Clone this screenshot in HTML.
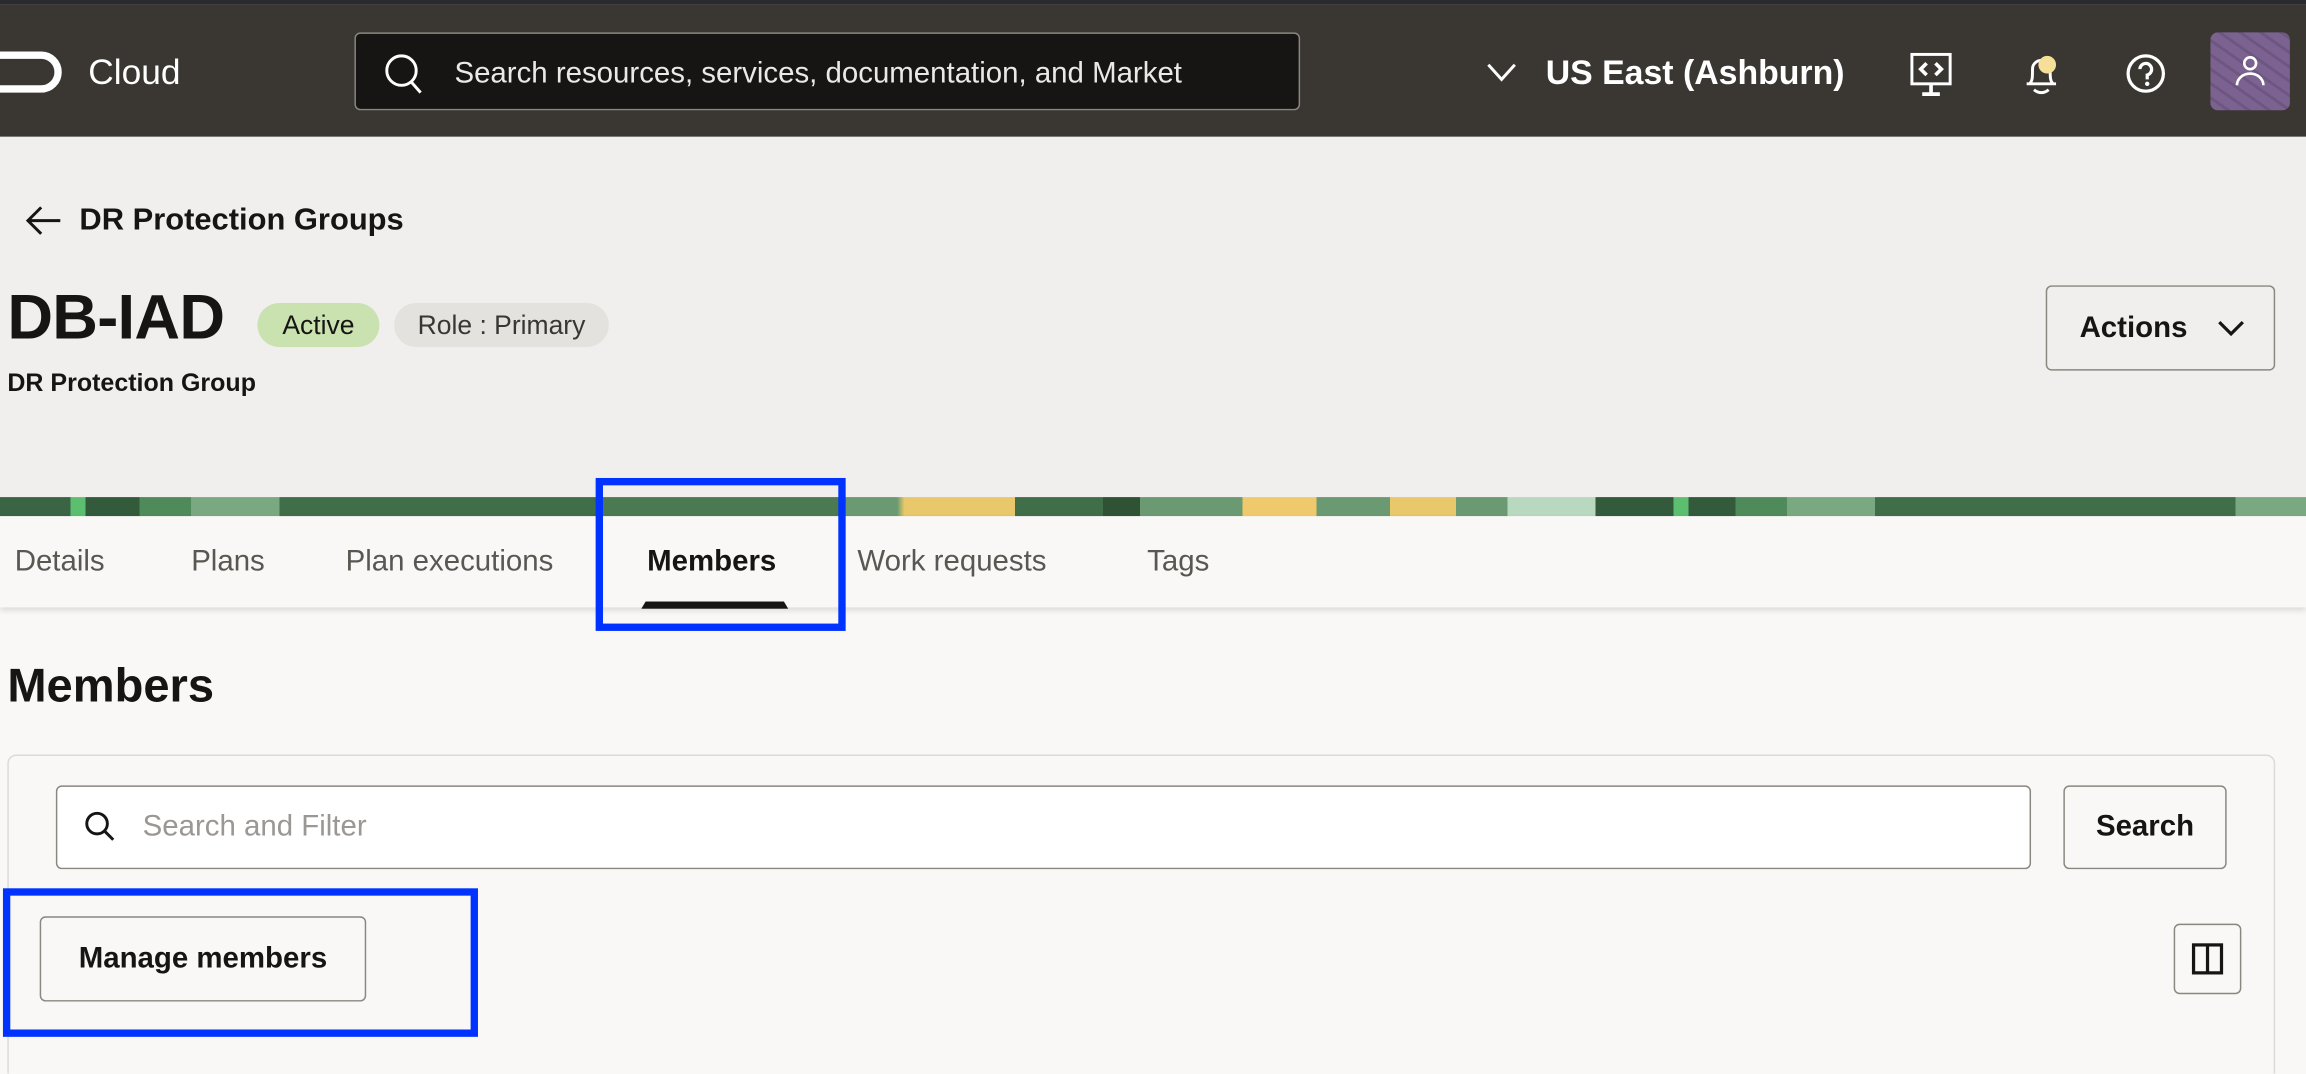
<!DOCTYPE html>
<html><head><meta charset="utf-8">
<style>
html,body{margin:0;padding:0;width:2306px;height:1074px;overflow:hidden;background:#f9f8f6;}
#w{position:absolute;left:0;top:0;width:1568px;height:730px;transform:scale(1.4707);transform-origin:0 0;font-family:"Liberation Sans",sans-serif;color:#161513;background:#f9f8f6;overflow:hidden}
.a{position:absolute}
.btn{position:absolute;border:1px solid #8a8680;border-radius:4px;background:#f9f8f6;box-sizing:border-box;display:flex;align-items:center;justify-content:center;font-weight:bold;font-size:19px;color:#161513}
.tab{position:absolute;top:371px;font-size:20px;color:#5a5753}
.blue{position:absolute;border:5px solid #0033ff;box-sizing:border-box}
</style></head><body><div id="w">
<div class="a" style="left:0;top:0;width:1568px;height:3px;background:#2b2a30"></div>
<div class="a" style="left:0;top:3px;width:1568px;height:90px;background:#3a3632"></div>
<div class="a" style="left:-24px;top:35px;width:56px;height:18px;border:5px solid #fff;border-radius:14px"></div>
<div class="a" style="left:60px;top:36px;font-size:24px;color:#fff">Cloud</div>
<div class="a" style="left:241px;top:22px;width:643px;height:53px;background:#161513;border:1px solid #8a8680;border-radius:4px;box-sizing:border-box"></div>
<svg class="a" style="left:259px;top:35px" width="30" height="30" viewBox="0 0 30 30"><circle cx="14" cy="13" r="10" fill="none" stroke="#fff" stroke-width="2"/><path d="M20 20l7 8" stroke="#fff" stroke-width="2"/></svg>
<div class="a" style="left:309px;top:39px;font-size:20px;color:#ebe9e6">Search resources, services, documentation, and Market</div>
<svg class="a" style="left:1010px;top:41px" width="22" height="16" viewBox="0 0 22 16"><path d="M2 3l9 10 9-10" fill="none" stroke="#fff" stroke-width="2"/></svg>
<div class="a" style="left:1051px;top:36px;font-size:23px;font-weight:bold;color:#fff">US East (Ashburn)</div>
<svg class="a" style="left:1298px;top:35px" width="32" height="32" viewBox="0 0 32 32"><rect x="2" y="2" width="26" height="20" fill="none" stroke="#fff" stroke-width="2"/><path d="M12 8l-4 4 4 4M18 8l4 4-4 4" fill="none" stroke="#fff" stroke-width="2.5"/><path d="M15 22v6M9 29h12" stroke="#fff" stroke-width="2.5"/></svg>
<svg class="a" style="left:1372px;top:33px" width="32" height="34" viewBox="0 0 32 34"><path d="M6 24h20M8 24c2-2 2-4 2-10a6 6 0 0 1 12 0c0 6 0 8 2 10" fill="none" stroke="#fff" stroke-width="2"/><path d="M11 28q5 4 10 0" fill="none" stroke="#fff" stroke-width="2"/><circle cx="20" cy="11" r="6" fill="#f6df98"/></svg>
<svg class="a" style="left:1444px;top:35px" width="30" height="30" viewBox="0 0 30 30"><circle cx="15" cy="15" r="12" fill="none" stroke="#fff" stroke-width="2.2"/><path d="M11 12a4 4 0 1 1 5 4v3" fill="none" stroke="#fff" stroke-width="2.2"/><circle cx="16" cy="22" r="1.5" fill="#fff"/></svg>
<div class="a" style="left:1503px;top:22px;width:54px;height:53px;border-radius:5px;background:repeating-linear-gradient(35deg,#7b6290 0 6px,#6e5682 6px 8px)"></div>
<svg class="a" style="left:1517px;top:36px" width="26" height="26" viewBox="0 0 26 26"><circle cx="13" cy="7" r="4" fill="none" stroke="#fff" stroke-width="1.8"/><path d="M4 22a9 8 0 0 1 18 0" fill="none" stroke="#fff" stroke-width="1.8"/></svg>
<div class="a" style="left:0;top:93px;width:1568px;height:245px;background:#f1efed"></div>
<svg class="a" style="left:16px;top:139px" width="28" height="22" viewBox="0 0 28 22"><path d="M12 2l-9 9 9 9M3 11h22" fill="none" stroke="#161513" stroke-width="2"/></svg>
<div class="a" style="left:54px;top:138px;font-size:21px;font-weight:bold">DR Protection Groups</div>
<div class="a" style="left:5px;top:192px;font-size:43px;font-weight:bold;letter-spacing:-0.5px">DB-IAD</div>
<div class="a" style="left:175px;top:206px;width:83px;height:30px;border-radius:15px;background:#c9e2b0;font-size:18px;text-align:center;line-height:30px">Active</div>
<div class="a" style="left:268px;top:206px;width:146px;height:30px;border-radius:15px;background:#e4e2df;font-size:18px;text-align:center;line-height:30px;color:#3a3632">Role : Primary</div>
<div class="a" style="left:5px;top:251px;font-size:17px;font-weight:bold">DR Protection Group</div>
<div class="btn" style="left:1391px;top:194px;width:156px;height:58px;background:#f1efed;justify-content:flex-start;padding-left:22px;font-size:20px">Actions<svg style="position:absolute;left:115px;top:21px" width="20" height="14" viewBox="0 0 20 14"><path d="M2 3l8 8 8-8" fill="none" stroke="#161513" stroke-width="2.2"/></svg></div>
<div class="a" style="left:0;top:338px;width:1568px;height:13px;background:linear-gradient(90deg,#3a6444 0 48px,#5bbf6f 48px 58px,#345a3c 58px 95px,#4f8a5a 95px 130px,#7aa880 130px 190px,#3f6e48 190px 410px,#4b7a52 410px 575px,#6b9a72 575px 610px,#e8c86a 615px 690px,#3f6e48 690px 750px,#2f5234 750px 775px,#6b9a72 775px 845px,#efca6c 845px 895px,#6b9a72 895px 945px,#e8c86a 945px 990px,#6b9a72 990px 1025px,#b8d8c0 1025px 1085px,#345a3c 1085px 1138px,#5bbf6f 1138px 1148px,#345a3c 1148px 1180px,#4f8a5a 1180px 1215px,#7aa880 1215px 1275px,#3f6e48 1275px 1520px,#7aa880 1520px 1568px)"></div>
<div class="a" style="left:0;top:351px;width:1568px;height:62px;background:#f9f8f6;box-shadow:0 2px 4px rgba(0,0,0,0.12)"></div>
<div class="tab" style="left:10px">Details</div>
<div class="tab" style="left:130px">Plans</div>
<div class="tab" style="left:235px">Plan executions</div>
<div class="tab" style="left:440px;color:#161513;font-weight:bold">Members</div>
<div class="tab" style="left:583px">Work requests</div>
<div class="tab" style="left:780px">Tags</div>
<div class="a" style="left:436px;top:409px;width:100px;height:5px;background:#161513;clip-path:polygon(3px 0,97px 0,100px 100%,0 100%)"></div>
<div class="blue" style="left:405px;top:325px;width:170px;height:104px"></div>
<div class="a" style="left:5px;top:448px;font-size:32px;font-weight:bold">Members</div>
<div class="a" style="left:5px;top:513px;width:1542px;height:240px;border:1px solid #dcdad6;border-radius:6px;box-sizing:border-box"></div>
<div class="a" style="left:38px;top:534px;width:1343px;height:57px;background:#fff;border:1px solid #8a8680;border-radius:4px;box-sizing:border-box"></div>
<svg class="a" style="left:56px;top:550px" width="24" height="24" viewBox="0 0 24 24"><circle cx="10" cy="10" r="7" fill="none" stroke="#161513" stroke-width="2"/><path d="M15 15l6 6" stroke="#161513" stroke-width="2"/></svg>
<div class="a" style="left:97px;top:551px;font-size:20px;color:#9a9794">Search and Filter</div>
<div class="btn" style="left:1403px;top:534px;width:111px;height:57px;font-size:20px">Search</div>
<div class="btn" style="left:27px;top:623px;width:222px;height:58px;font-size:20px">Manage members</div>
<div class="blue" style="left:2px;top:604px;width:323px;height:101px"></div>
<div class="btn" style="left:1478px;top:628px;width:46px;height:48px"><svg width="22" height="22" viewBox="0 0 22 22"><rect x="1.5" y="1.5" width="19" height="19" fill="none" stroke="#161513" stroke-width="2.2"/><path d="M11 1v20" stroke="#161513" stroke-width="2.2"/></svg></div>
</div></body></html>
